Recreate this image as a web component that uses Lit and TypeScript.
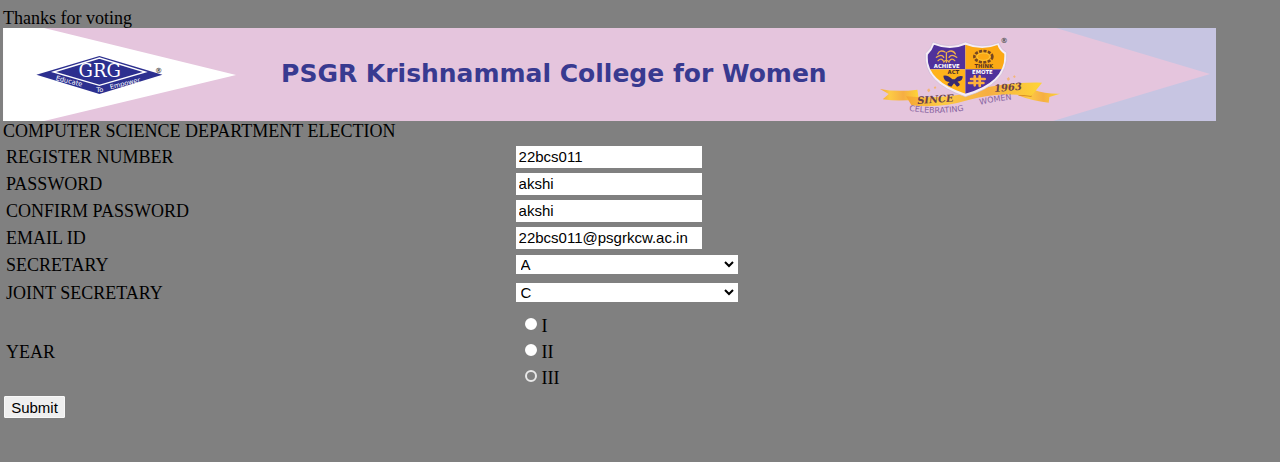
import { LitElement, html, css, svg } from "lit";
import { customElement, state } from "lit/decorators.js";

@customElement("college-banner")
class CollegeBanner extends LitElement {
  static styles = css`
    :host { display: block; }
    svg { display: block; width: 100%; height: auto; }
    .title { font: 700 25px "DejaVu Sans", sans-serif; fill: #383a90; }
    .grg { font: 54px "DejaVu Serif", serif; fill: #fff; }
    .motto { font: 20px "DejaVu Sans", sans-serif; fill: #fff; }
    .reg { font: 700 22px "DejaVu Sans", sans-serif; fill: #555; }
    .tag { font: 700 16px "DejaVu Sans", sans-serif; }
    .since { font: italic 700 30px "DejaVu Serif", serif; fill: #68404c; }
    .ribbon-text { font: 24px "DejaVu Sans", sans-serif; fill: #86629f; }
  `;

  private diamondLogo() {
    return svg`
      <g transform="translate(-3 -28) scale(.3333)">
        <path d="M109 224 L298 168 L487 224 L298 282Z" fill="#2c2f8f"/>
        <path d="M160 216 L298 174 L436 216 L298 256Z" fill="none" stroke="#fff" stroke-width="4"/>
        <text class="grg" x="299" y="230" text-anchor="middle">GRG</text>
        <text class="motto" x="166" y="240" transform="rotate(14 166 240)">Educate</text>
        <text class="motto" x="299" y="276" text-anchor="middle">To</text>
        <text class="motto" x="331" y="268" transform="rotate(-14 331 268)">Empower</text>
        <text class="reg" x="465" y="218">®</text>
      </g>`;
  }

  private crest() {
    return svg`
      <g transform="translate(857 -8) scale(.3333)">
        <path d="M60 207 Q110 217 172 209 L176 236 Q125 246 68 238 L86 222Z" fill="url(#gold)"/>
        <path d="M600 221 Q555 222 520 209 L474 226 Q515 243 566 248 L568 231Z" fill="url(#gold)"/>
        <path d="M474 226 L514 230 L520 209Z" fill="#c9791c"/>
        <path d="M138 229 Q240 238 322 219 Q410 186 546 188 L514 228 Q420 215 325 240 Q240 266 154 256Z" fill="url(#gold)"/>
        <path d="M218 66 Q270 88 316 66 Q366 88 416 68 Q422 88 440 98 Q446 192 316 230 Q188 188 196 100 Q212 88 218 66Z" fill="#f5edf5" stroke="#cbb9d4" stroke-width="2"/>
        <g clip-path="url(#shield)">
          <rect x="190" y="60" width="126" height="88" fill="#50319b"/>
          <rect x="316" y="60" width="130" height="88" fill="#fca915"/>
          <rect x="190" y="148" width="126" height="90" fill="#ffb31a"/>
          <rect x="316" y="148" width="130" height="90" fill="#50319b"/>
        </g>
        <g fill="none" stroke="#efb04b" stroke-width="4" stroke-linecap="round">
          <path d="M259 127 V98 M255 96 Q240 88 233 102 M263 96 Q278 88 286 102 M251 112 Q245 100 229 112 M267 112 Q274 100 290 112 M250 123 Q244 112 234 122 M268 123 Q275 112 284 122"/>
          <path d="M251 126 Q259 116 267 126"/>
        </g>
        <ellipse cx="370" cy="110" rx="27" ry="17" fill="none" stroke="#744622" stroke-width="8" stroke-dasharray="9 4"/>
        <ellipse cx="370" cy="110" rx="19" ry="11" fill="none" stroke="#f9d34b" stroke-width="2"/>
        <path d="M250 167 Q264 164 277 178 L284 178 Q295 164 308 169 Q309 183 292 185 Q307 195 291 200 L282 190 L274 200 Q253 196 269 186 Q250 184 250 167Z" fill="#392b70"/>
        <g fill="none" stroke="#ffb13c" stroke-width="8" stroke-linecap="round">
          <path d="M344 169 V196 M359 169 V198 M333 177 H374 M327 189 H370"/>
        </g>
        <text class="tag" fill="#fff" x="260" y="145" text-anchor="middle">ACHIEVE</text>
        <text class="tag" fill="#5e351f" x="371" y="145" text-anchor="middle">THINK</text>
        <text class="tag" fill="#4d302c" x="280" y="163" text-anchor="middle">ACT</text>
        <text class="tag" fill="#fff" x="367" y="163" text-anchor="middle">EMOTE</text>
        <path d="M201 210 l6 -5 4 7 -6 5z M221 202 l5 -3 3 5 -5 3z M440 176 l6 -5 4 7 -6 5z M459 169 l5 -3 3 5 -5 3z" fill="#f3b577"/>
        <text class="since" x="172" y="252" transform="rotate(-4 172 252)">SINCE</text>
        <text class="since" x="403" y="216" transform="rotate(-5 403 216)">1963</text>
        <path id="celebrate" d="M147 272 Q250 289 350 264" fill="none"/>
        <path id="women" d="M360 254 Q410 242 490 235" fill="none"/>
        <text class="ribbon-text"><textPath href="#celebrate">CELEBRATING</textPath></text>
        <text class="ribbon-text"><textPath href="#women">WOMEN</textPath></text>
        <text class="reg" x="421" y="68">®</text>
      </g>`;
  }

  render() {
    return html`
      <svg viewBox="0 0 1213 93" role="img" aria-label="PSGR Krishnammal College for Women">
        <defs>
          <linearGradient id="gold">
            <stop offset="0" stop-color="#f5a534"/>
            <stop offset=".25" stop-color="#fdcb45"/>
            <stop offset=".6" stop-color="#f6ae43"/>
            <stop offset="1" stop-color="#fed536"/>
          </linearGradient>
          <clipPath id="shield">
            <path d="M222 74 Q270 94 316 74 Q366 94 412 75 Q418 92 433 102 Q438 186 316 221 Q196 182 203 104 Q216 92 222 74Z"/>
          </clipPath>
        </defs>
        <rect width="1213" height="93" fill="#e5c5dd"/>
        <path d="M0 0 H41 L233 47 L41 93 H0Z" fill="#fff"/>
        <path d="M1053 0 H1213 V93 H1050 L1207 46Z" fill="#c7c5e2"/>
        ${this.diamondLogo()}
        <text class="title" x="278" y="54">PSGR Krishnammal College for Women</text>
        ${this.crest()}
      </svg>`;
  }
}

@customElement("app-root")
class AppRoot extends LitElement {
  static styles = css`
    :host {
      display: block;
      min-height: 100vh;
      box-sizing: border-box;
      padding: 8px 0 8px 3px;
      background: #808080;
      color: #000;
      font: 18px/20px "Liberation Serif", serif;
    }
    p, h1 { margin: 0; font: inherit; }
    college-banner { width: 95%; }
    .fields { padding: 2px 3px 0 0; }
    .row {
      display: grid;
      grid-template-columns: 2fr 3fr;
      align-items: center;
      min-height: 27px;
    }
    .row > * { margin-left: 3px; }
    .tall { min-height: 29px; }
    .year { min-height: 89px; }
    input, select, button {
      font: 15px "Liberation Sans", sans-serif;
      color: #000;
      box-sizing: border-box;
      border-radius: 0;
    }
    .text {
      width: 186px;
      height: 22px;
      padding: 0 3px;
      border: 0;
      background: #fff;
    }
    .choice {
      position: relative;
      width: 222px;
      height: 19px;
    }
    .choice select {
      display: block;
      appearance: none;
      width: 100%;
      height: 100%;
      padding: 0 5px;
      border: 0;
      background: #fff;
    }
    .chevron {
      position: absolute;
      right: 4px;
      top: 6px;
      width: 10px;
      height: 7px;
      pointer-events: none;
    }
    .options { display: grid; gap: 6px; padding-left: 9px; }
    .option { display: flex; align-items: center; gap: 5px; }
    .radio {
      appearance: none;
      width: 12px;
      height: 12px;
      margin: 0 0 3px;
      border: 2px solid #fff;
      border-radius: 50%;
      background: #fff;
    }
    .radio:checked { border-color: #e8e8e8; background: transparent; }
    .submit {
      display: block;
      width: 61px;
      height: 22px;
      margin: 0 1px;
      padding: 0;
      border: 1px solid #f8f8f8;
      border-radius: 1px;
      background: #efefef;
    }
  `;

  @state() private year = "III";

  private fields = [
    { id: "register", label: "REGISTER NUMBER", value: "22bcs011" },
    { id: "password", label: "PASSWORD", value: "akshi" },
    { id: "confirm", label: "CONFIRM PASSWORD", value: "akshi" },
    { id: "email", label: "EMAIL ID", value: "22bcs011@psgrkcw.ac.in" },
  ];

  private select(id: string, options: string[]) {
    return html`
      <div class="choice">
        <select id=${id} name=${id}>${options.map((o) => html`<option>${o}</option>`)}</select>
        <svg class="chevron" viewBox="0 0 10 7" aria-hidden="true">
          <path d="M1 1 L5 5 L9 1" fill="none" stroke="#000" stroke-width="2"/>
        </svg>
      </div>`;
  }

  render() {
    return html`
      <p>Thanks for voting</p>
      <college-banner></college-banner>
      <h1>COMPUTER SCIENCE DEPARTMENT ELECTION</h1>
      <form @submit=${(e: Event) => e.preventDefault()}>
        <div class="fields">
          ${this.fields.map((f) => html`
            <div class="row">
              <label for=${f.id}>${f.label}</label>
              <input class="text" id=${f.id} name=${f.id} type="text" .value=${f.value}>
            </div>`)}
          <div class="row">
            <label for="secretary">SECRETARY</label>
            ${this.select("secretary", ["A", "B"])}
          </div>
          <div class="row tall">
            <label for="joint">JOINT SECRETARY</label>
            ${this.select("joint", ["C", "D"])}
          </div>
          <div class="row year" role="radiogroup" aria-labelledby="year-label">
            <span id="year-label">YEAR</span>
            <div class="options">
              ${["I", "II", "III"].map((y) => html`
                <label class="option">
                  <input class="radio" type="radio" name="year" .value=${y}
                    .checked=${this.year === y} @change=${() => (this.year = y)}>${y}
                </label>`)}
            </div>
          </div>
        </div>
        <button class="submit" type="submit">Submit</button>
      </form>`;
  }
}
